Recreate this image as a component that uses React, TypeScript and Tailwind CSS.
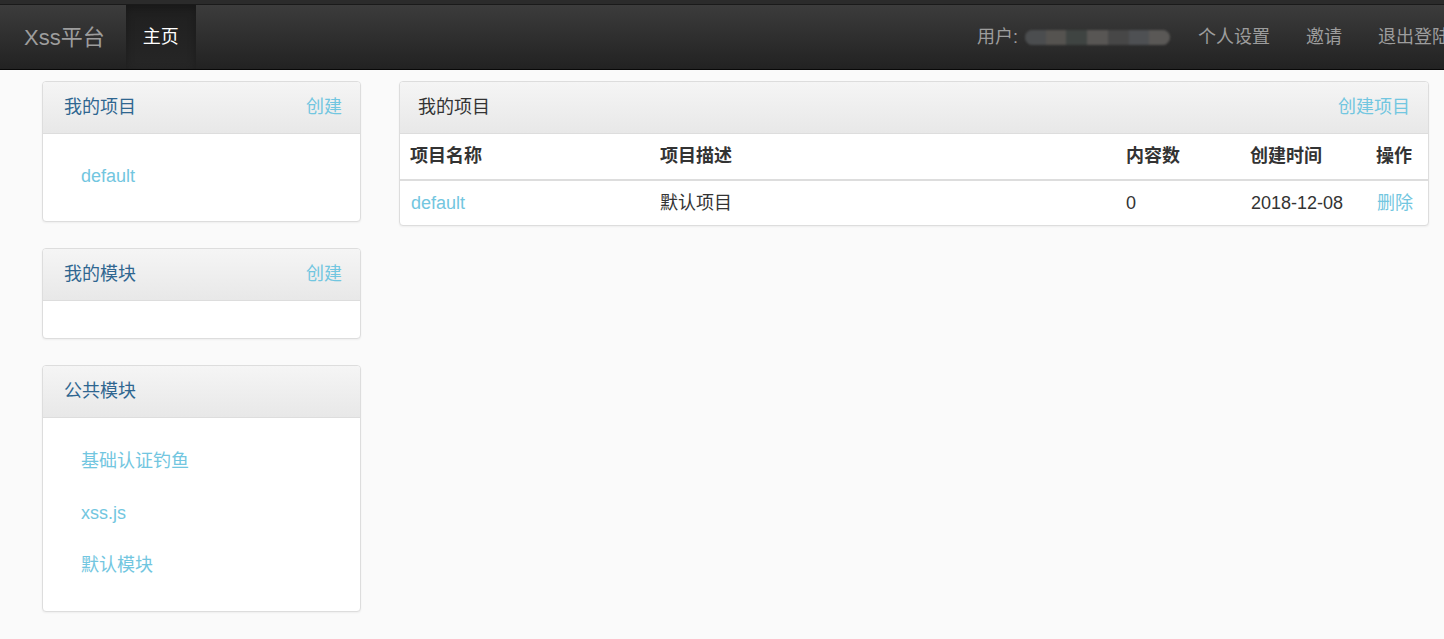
import { ReactNode } from "react";

const FONT = "font-['Liberation_Sans','Noto_Sans_CJK_SC',sans-serif]";

interface PanelProps {
  title: string;
  titleClass?: string;
  action?: string;
  children: ReactNode;
  headPad?: string;
}

function Panel({ title, titleClass = "text-[#2f6690]", action, children, headPad = "pl-[21px] pr-[18px]" }: PanelProps) {
  return (
    <div className="overflow-hidden rounded-[4px] border border-[#dddddd] bg-white shadow-[0_1px_2px_rgba(0,0,0,0.05)]">
      <div
        className={`flex h-[52px] items-center justify-between border-b border-[#dddddd] bg-gradient-to-b from-[#f5f5f5] to-[#e8e8e8] ${headPad}`}
      >
        <span className={`text-[18px] ${titleClass}`}>{title}</span>
        {action && <span className="text-[18px] text-[#72c6e0]">{action}</span>}
      </div>
      {children}
    </div>
  );
}

function LinkList({ items, pad = "pb-[18px] pt-[16px]" }: { items: string[]; pad?: string }) {
  return (
    <ul className={`pl-[38px] ${pad}`}>
      {items.map((item) => (
        <li key={item} className="flex h-[52px] items-center text-[18px] text-[#72c6e0]">
          {item}
        </li>
      ))}
    </ul>
  );
}

function BlurredName() {
  const blocks = ["#4b4d4f", "#555350", "#3f4442", "#585654", "#474747", "#4e5053", "#5a5856"];
  return (
    <div className="ml-[7px] flex h-[15px] w-[145px] overflow-hidden rounded-full bg-[#4a4a4a] blur-[1px]">
      {blocks.map((c, i) => (
        <div key={i} className="h-full flex-1" style={{ backgroundColor: c }} />
      ))}
    </div>
  );
}

export default function App() {
  return (
    <div className={`min-h-screen bg-[#fafafa] ${FONT}`}>
      {/* Navbar */}
      <div className="h-[4px] bg-[#2b2b2b]" />
      <nav className="flex h-[66px] items-stretch overflow-hidden border-t border-[#1a1a1a] border-b border-b-[#080808] bg-gradient-to-b from-[#3c3c3c] to-[#222222]">
        <div className="flex items-center pl-[24px] pr-[21px] text-[22px] text-[#9d9d9d]">Xss平台</div>
        <div className="flex w-[70px] items-center justify-center bg-gradient-to-b from-[#1f1f1f] to-[#262626] text-[18px] text-white shadow-[inset_0_3px_9px_rgba(0,0,0,0.25)]">
          主页
        </div>
        <div className="ml-auto mr-[-24px] flex items-center text-[18px] text-[#9d9d9d]">
          <div className="flex items-center pl-[18px] pr-[28px]">
            <span>用户:</span>
            <BlurredName />
          </div>
          <span className="pr-[18px]">个人设置</span>
          <span className="px-[18px]">邀请</span>
          <span className="px-[18px]">退出登陆</span>
        </div>
      </nav>

      {/* Content */}
      <div className="flex items-start gap-[38px] pl-[42px] pr-[15px] pt-[11px]">
        <div className="flex w-[319px] shrink-0 flex-col gap-[26px]">
          <Panel title="我的项目" action="创建">
            <LinkList items={["default"]} pad="pb-[19px] pt-[16px]" />
          </Panel>
          <Panel title="我的模块" action="创建">
            <div className="h-[37px]" />
          </Panel>
          <Panel title="公共模块">
            <LinkList items={["基础认证钓鱼", "xss.js", "默认模块"]} pad="pb-[20px] pt-[17px]" />
          </Panel>
        </div>

        <div className="flex-1">
          <Panel title="我的项目" titleClass="text-[#333333]" action="创建项目" headPad="pl-[18px] pr-[18px]">
            <table className="w-full table-fixed text-left text-[18px] text-[#333333]">
              <colgroup>
                <col className="w-[250px]" />
                <col className="w-[466px]" />
                <col className="w-[124px]" />
                <col className="w-[126px]" />
                <col />
              </colgroup>
              <thead>
                <tr className="h-[46px] border-b-2 border-[#dddddd] font-bold">
                  <th className="pl-[10px]">项目名称</th>
                  <th className="pl-[10px]">项目描述</th>
                  <th className="pl-[10px]">内容数</th>
                  <th className="pl-[10px]">创建时间</th>
                  <th className="pl-[10px]">操作</th>
                </tr>
              </thead>
              <tbody>
                <tr className="h-[45px]">
                  <td className="pl-[11px] text-[#72c6e0]">default</td>
                  <td className="pl-[10px]">默认项目</td>
                  <td className="pl-[10px]">0</td>
                  <td className="pl-[11px]">2018-12-08</td>
                  <td className="pl-[11px] text-[#72c6e0]">删除</td>
                </tr>
              </tbody>
            </table>
          </Panel>
        </div>
      </div>
    </div>
  );
}
